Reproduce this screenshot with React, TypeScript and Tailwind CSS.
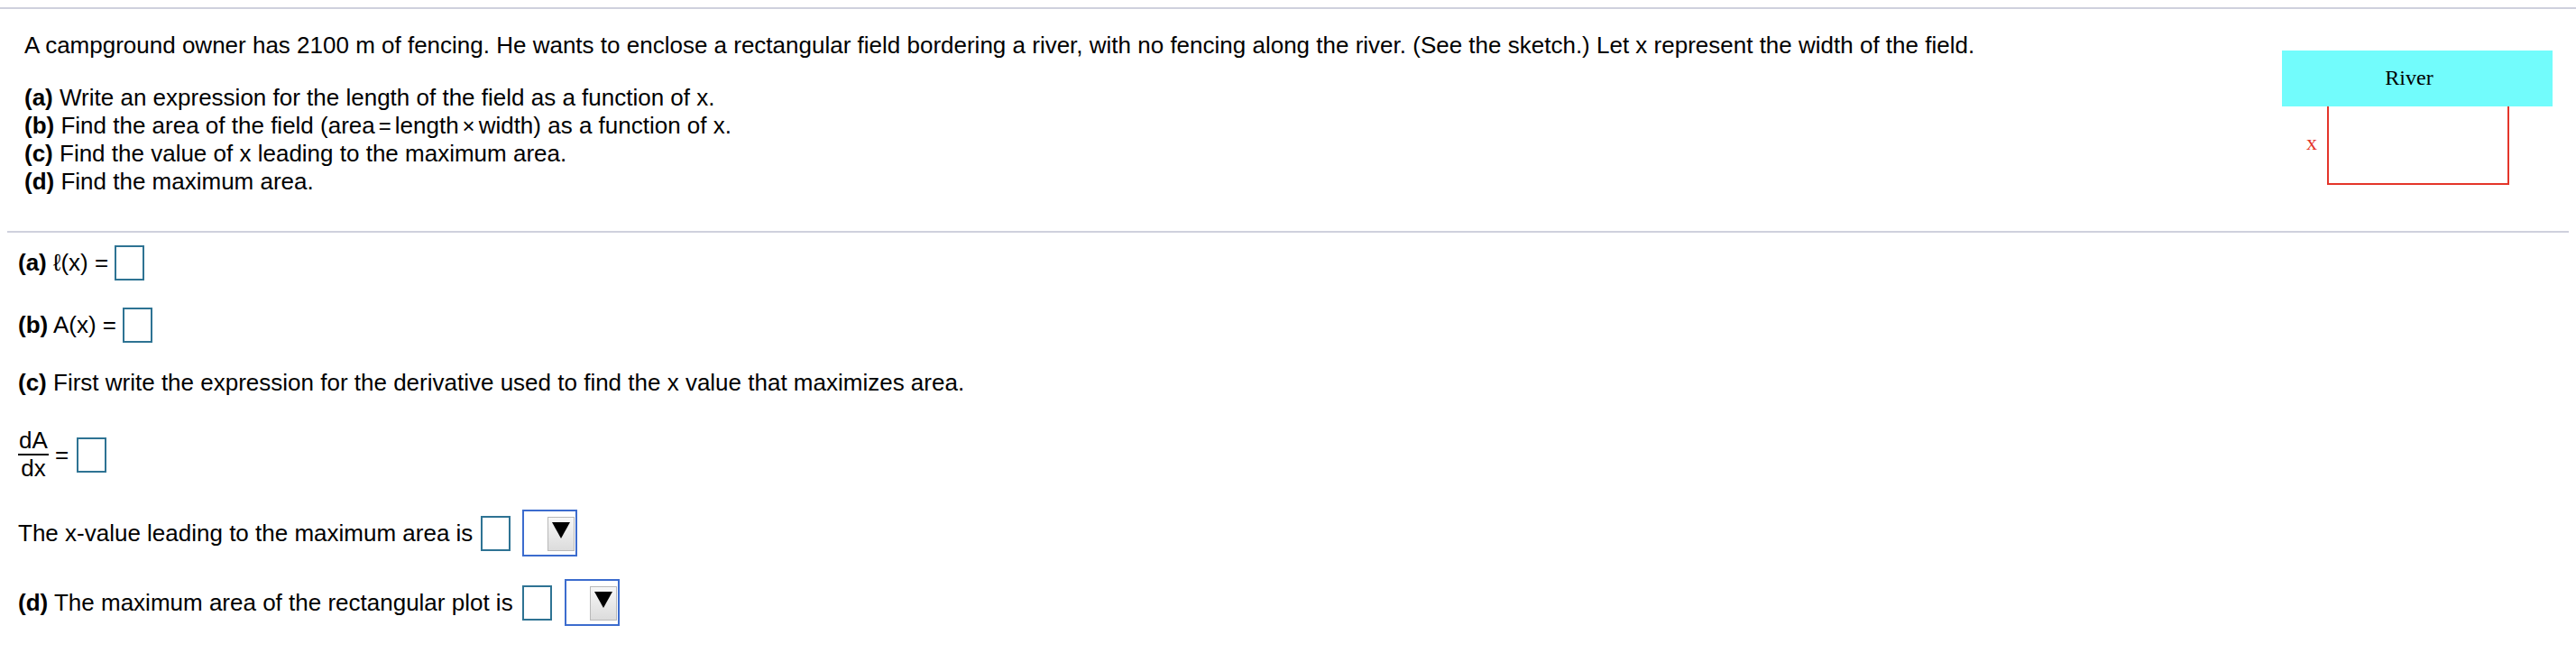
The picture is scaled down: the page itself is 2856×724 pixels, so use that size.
import type { ReactNode } from "react"

function AnswerBox({ className = "" }: { className?: string }) {
  return <span className={`inline-block h-[39px] w-[33px] shrink-0 border-2 border-[#2e7393] bg-white ${className}`} />
}

function UnitSelect({ className = "" }: { className?: string }) {
  return (
    <div className={`relative h-[52px] w-[61px] shrink-0 border-2 border-[#3c6cce] bg-white ${className}`}>
      <div className="absolute right-[1px] top-[6px] flex h-[38px] w-[30px] justify-center border border-[#b9b9b9] bg-linear-to-b from-[#f7f7f7] to-[#dcdcdc] pt-[5px]">
        <svg width="20" height="18" viewBox="0 0 20 18">
          <polygon points="0,0 20,0 10,18" fill="#000" />
        </svg>
      </div>
    </div>
  )
}

function Row({ children, className = "" }: { children: ReactNode; className?: string }) {
  return <div className={`flex items-center whitespace-pre ${className}`}>{children}</div>
}

function Sketch() {
  return (
    <svg className="mt-[46px] shrink-0" width="300" height="150" viewBox="0 0 300 150">
      <rect x="0" y="0" width="300" height="62" fill="#72fcfc" />
      <text
        x="141"
        y="38"
        textAnchor="middle"
        fontFamily="'Liberation Serif', 'Times New Roman', serif"
        fontSize="24"
        fill="#000"
      >
        River
      </text>
      <path d="M51 62 V148 H251 V62" fill="none" stroke="#e4352a" strokeWidth="2" />
      <text
        x="33"
        y="110"
        textAnchor="middle"
        fontFamily="'Liberation Serif', 'Times New Roman', serif"
        fontSize="24"
        fill="#e4352a"
      >
        x
      </text>
    </svg>
  )
}

export default function App() {
  return (
    <div className="min-h-[724px] bg-white font-['Liberation_Sans',Arial,sans-serif] text-[26px] text-black">
      <div className="pt-2">
        <div className="h-[2px] bg-[#cfd1dd]" />
      </div>

      {/* Question */}
      <div className="flex items-start justify-between pl-[27px] pr-[26px]">
        <div className="pt-[25px] pb-[39px] leading-[31px]">
          <p>
            A campground owner has 2100 m of fencing. He wants to enclose a rectangular field bordering a river, with no
            fencing along the river. (See the sketch.) Let x represent the width of the field.
          </p>
          <div className="mt-[27px]">
            <p>
              <b>(a)</b> Write an expression for the length of the field as a function of x.
            </p>
            <p>
              <b>(b)</b> Find the area of the field (area
              <span className="mx-[4px] text-[24px]">=</span>length
              <span className="mx-[4px] text-[24px]">×</span>width) as a function of x.
            </p>
            <p>
              <b>(c)</b> Find the value of x leading to the maximum area.
            </p>
            <p>
              <b>(d)</b> Find the maximum area.
            </p>
          </div>
        </div>
        <Sketch />
      </div>

      <div className="mx-2 h-[2px] bg-[#cfd1dd]" />

      {/* Answers */}
      <div className="px-[20px] leading-[31px]">
        <Row className="mt-[14px]">
          <b>(a)</b> ℓ(x) =<AnswerBox className="ml-[7px]" />
        </Row>

        <Row className="mt-[30px]">
          <b>(b)</b> A(x) =<AnswerBox className="ml-[7px]" />
        </Row>

        <p className="mt-[29px]">
          <b>(c)</b> First write the expression for the derivative used to find the x value that maximizes area.
        </p>

        <Row className="mt-[34px]">
          <span className="inline-flex flex-col items-center leading-[29px]">
            <span className="px-[1px]">dA</span>
            <span className="h-[2px] w-full bg-black" />
            <span>dx</span>
          </span>
          <span> =</span>
          <AnswerBox className="ml-[9px]" />
        </Row>

        <Row className="mt-[31px]">
          The x-value leading to the maximum area is
          <AnswerBox className="ml-[9px]" />
          <UnitSelect className="ml-[13px]" />
        </Row>

        <Row className="mt-[25px]">
          <b>(d)</b> The maximum area of the rectangular plot is
          <AnswerBox className="ml-[10px]" />
          <UnitSelect className="ml-[14px]" />
        </Row>
      </div>
    </div>
  )
}
